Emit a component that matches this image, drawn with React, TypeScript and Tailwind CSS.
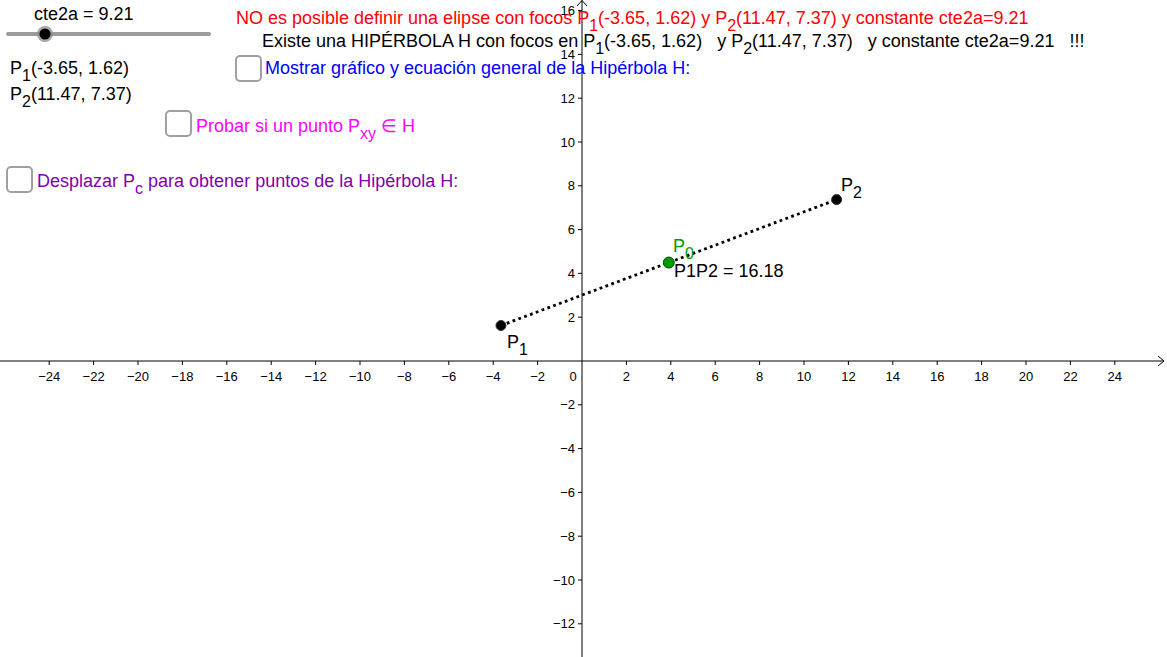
import React from 'react';

// GeoGebra view: origin in px and px per unit
const OX = 582;
const OY = 361;
const SX = 22.2;
const SY = 21.9;

const px = (x: number) => OX + x * SX;
const py = (y: number) => OY - y * SY;

const P1 = { x: -3.65, y: 1.62 };
const P2 = { x: 11.47, y: 7.37 };
const P0 = { x: (P1.x + P2.x) / 2, y: (P1.y + P2.y) / 2 };

const X_TICKS = Array.from({ length: 25 }, (_, i) => -24 + i * 2).filter((v) => v !== 0);
const Y_TICKS = Array.from({ length: 15 }, (_, i) => -12 + i * 2).filter((v) => v !== 0);

const fmt = (v: number) => (v < 0 ? `\u2212${-v}` : `${v}`);

function Sub({ children }: { children: React.ReactNode }) {
  return <span className="relative top-[7px] text-[16px]">{children}</span>;
}

function Checkbox({ className }: { className: string }) {
  return <div className={`absolute h-[27px] w-[27px] rounded-[5px] border-2 border-[#a0a0a0] bg-white ${className}`} />;
}

function Axes() {
  return (
    <svg className="absolute inset-0" width={1167} height={657}>
      {/* axes */}
      <line x1={0} y1={OY} x2={1164} y2={OY} stroke="#000" strokeWidth={1} />
      <polyline points={`1158,${OY - 5} 1164,${OY} 1158,${OY + 5}`} fill="none" stroke="#000" strokeWidth={1} />
      <line x1={OX} y1={0} x2={OX} y2={657} stroke="#000" strokeWidth={1} />
      <polyline points={`${OX - 5},6 ${OX},0.5 ${OX + 5},6`} fill="none" stroke="#000" strokeWidth={1} />

      {X_TICKS.map((v) => (
        <g key={`x${v}`}>
          <line x1={px(v)} y1={OY} x2={px(v)} y2={OY + 4} stroke="#000" strokeWidth={1} />
          <text x={px(v)} y={381} fontSize={13} textAnchor="middle" fill="#000">
            {fmt(v)}
          </text>
        </g>
      ))}
      <text x={573} y={381} fontSize={13} textAnchor="middle" fill="#000">
        0
      </text>

      {Y_TICKS.map((v) => (
        <g key={`y${v}`}>
          <line x1={OX - 4} y1={py(v)} x2={OX} y2={py(v)} stroke="#000" strokeWidth={1} />
          <text x={575} y={py(v) + 4.5} fontSize={13} textAnchor="end" fill="#000">
            {fmt(v)}
          </text>
        </g>
      ))}

      {/* segment P1P2 */}
      <line
        x1={px(P1.x)}
        y1={py(P1.y)}
        x2={px(P2.x)}
        y2={py(P2.y)}
        stroke="#000"
        strokeWidth={2.8}
        strokeDasharray="2.8 3.4"
      />

      <circle cx={px(P1.x)} cy={py(P1.y)} r={5} fill="#000" stroke="#333" strokeWidth={1} />
      <circle cx={px(P2.x)} cy={py(P2.y)} r={5} fill="#000" stroke="#333" strokeWidth={1} />
      <circle cx={px(P0.x)} cy={py(P0.y)} r={5.5} fill="#009900" stroke="#004d00" strokeWidth={1} />

      {/* slider cte2a */}
      <line x1={8} y1={34} x2={209} y2={34} stroke="#9b9b9b" strokeWidth={4} strokeLinecap="round" />
      <circle cx={45} cy={34} r={8} fill="#8a8a8a" opacity={0.75} />
      <circle cx={45} cy={34} r={5.5} fill="#000" />
    </svg>
  );
}

export default function App() {
  return (
    <div className="relative h-[657px] w-[1167px] overflow-hidden bg-white font-['Liberation_Sans',Arial,sans-serif] text-[18px] leading-[18px] text-black">
      <Axes />

      <div className="absolute left-[34px] top-[5px] whitespace-pre">cte2a = 9.21</div>

      <div className="absolute left-[236px] top-[9px] whitespace-pre text-[#ff0000]">
        NO es posible definir una elipse con focos P<Sub>1</Sub>(-3.65, 1.62) y P<Sub>2</Sub>(11.47, 7.37) y constante cte2a=9.21
      </div>

      <div className="absolute left-[262px] top-[32px] whitespace-pre">
        Existe una HIPÉRBOLA H con focos en P<Sub>1</Sub>(-3.65, 1.62)   y P<Sub>2</Sub>(11.47, 7.37)   y constante cte2a=9.21   !!!
      </div>

      <div className="absolute left-[10px] top-[59px] whitespace-pre">
        P<Sub>1</Sub>(-3.65, 1.62)
      </div>
      <div className="absolute left-[10px] top-[85px] whitespace-pre">
        P<Sub>2</Sub>(11.47, 7.37)
      </div>

      <Checkbox className="left-[235px] top-[55px]" />
      <div className="absolute left-[265px] top-[59px] whitespace-pre text-[#0000ff]">
        Mostrar gráfico y ecuación general de la Hipérbola H:
      </div>

      <Checkbox className="left-[165px] top-[110px]" />
      <div className="absolute left-[196px] top-[117px] whitespace-pre text-[#ff00ff]">
        Probar si un punto P<Sub>xy</Sub> ∈ H
      </div>

      <Checkbox className="left-[6px] top-[166px]" />
      <div className="absolute left-[37px] top-[172px] whitespace-pre text-[#7f00ad]">
        Desplazar P<Sub>c</Sub> para obtener puntos de la Hipérbola H:
      </div>

      {/* point labels */}
      <div className="absolute left-[841px] top-[176px] whitespace-pre">
        P<Sub>2</Sub>
      </div>
      <div className="absolute left-[673px] top-[237px] whitespace-pre text-[#009900]">
        P<Sub>0</Sub>
      </div>
      <div className="absolute left-[674px] top-[262px] whitespace-pre">P1P2 = 16.18</div>
      <div className="absolute left-[507px] top-[333px] whitespace-pre">
        P<Sub>1</Sub>
      </div>
    </div>
  );
}
